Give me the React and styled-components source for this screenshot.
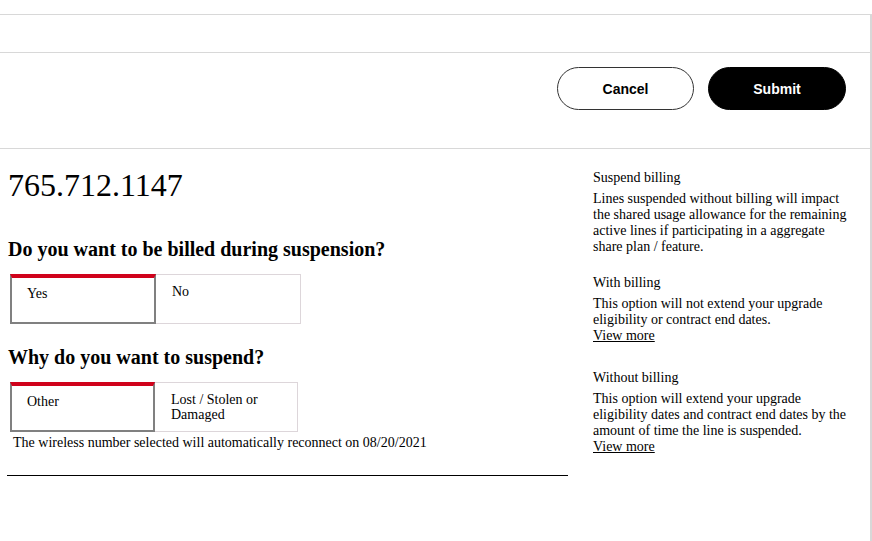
import React, { useState } from 'react';
import styled, { createGlobalStyle } from 'styled-components';

const GlobalStyle = createGlobalStyle`
    html, body {
        margin: 0;
        padding: 0;
        background: #fff;
        color: #000;
        font-family: "Liberation Serif", "Times New Roman", serif;
    }
`;

const Page = styled.div`
    padding-top: 14px;
`;

const Frame = styled.div`
    width: 870px;
    min-height: 527px;
    border-top: 1px solid #d8d8d8;
    border-right: 2px solid #d8d8d8;
`;

const TopBand = styled.div`
    height: 37px;
    border-bottom: 1px solid #d8d8d8;
`;

const ActionBar = styled.div`
    display: flex;
    justify-content: flex-end;
    align-items: flex-start;
    gap: 14px;
    height: 96px;
    padding: 14px 24px 0 0;
    box-sizing: border-box;
    border-bottom: 1px solid #d8d8d8;
`;

const PillButton = styled.button`
    width: ${p => (p.$primary ? '138px' : '137px')};
    height: 43px;
    border-radius: 22px;
    border: 1px solid ${p => (p.$primary ? '#000' : '#333')};
    background: ${p => (p.$primary ? '#000' : '#fff')};
    color: ${p => (p.$primary ? '#fff' : '#000')};
    font-family: "Liberation Sans", Arial, sans-serif;
    font-weight: bold;
    font-size: 14px;
    cursor: pointer;
`;

const Content = styled.div`
    display: grid;
    grid-template-columns: 560px 260px;
    column-gap: 25px;
    padding: 20px 0 0 8px;
`;

const Phone = styled.div`
    font-size: 32px;
    line-height: 32px;
`;

const Question = styled.h3`
    margin: ${p => p.$top}px 0 15px;
    font-size: 20px;
    line-height: 20px;
    font-weight: bold;
`;

const ToggleRow = styled.div`
    display: flex;
    margin-left: 2px;
`;

const Toggle = styled.div`
    width: ${p => p.$w}px;
    height: 50px;
    box-sizing: border-box;
    padding: ${p => (p.$active ? '8px 15px 0' : '9px 16px 0')};
    font-size: 14px;
    line-height: 15px;
    cursor: pointer;
    background: #fff;
    border: ${p => (p.$active ? '2px solid #808080' : '1px solid #ddd6da')};
    border-top: ${p => (p.$active ? '4px solid #d0021b' : '1px solid #ddd6da')};
    border-left-width: ${p => (p.$first || p.$active ? undefined : '0')};
`;

const Note = styled.div`
    font-size: 14px;
    line-height: 16px;
    padding: 3px 0 0 5px;
`;

const Divider = styled.hr`
    margin: 24px 0 0 -1px;
    border: 0;
    border-top: 1px solid #000;
`;

const Aside = styled.div`
    font-size: 14px;
    line-height: 16px;
    padding-top: 1px;
`;

const InfoBlock = styled.div`
    margin-bottom: 20px;
`;

const InfoTitle = styled.div`
    margin-bottom: 5px;
`;

const MoreLink = styled.a`
    display: block;
    color: #000;
    text-decoration: underline;
    padding-bottom: 6px;
    cursor: pointer;
`;

const info = [
    {
        title: 'Suspend billing',
        text: 'Lines suspended without billing will impact the shared usage allowance for the remaining active lines if participating in a aggregate share plan / feature.'
    },
    {
        title: 'With billing',
        text: 'This option will not extend your upgrade eligibility or contract end dates.',
        more: true
    },
    {
        title: 'Without billing',
        text: 'This option will extend your upgrade eligibility dates and contract end dates by the amount of time the line is suspended.',
        more: true
    }
];

function ToggleGroup({ options, value, onChange }) {
    return (
        <ToggleRow>
            {options.map((opt, i) => (
                <Toggle
                    key={opt.label}
                    $w={opt.width}
                    $first={i === 0}
                    $active={value === opt.label}
                    onClick={() => onChange(opt.label)}
                >
                    {opt.label}
                </Toggle>
            ))}
        </ToggleRow>
    );
}

export default function App() {
    const [billed, setBilled] = useState('Yes');
    const [reason, setReason] = useState('Other');

    return (
        <Page>
            <GlobalStyle />
            <Frame>
                <TopBand />
                <ActionBar>
                    <PillButton>Cancel</PillButton>
                    <PillButton $primary>Submit</PillButton>
                </ActionBar>
                <Content>
                    <div>
                        <Phone>765.712.1147</Phone>
                        <Question $top={38}>Do you want to be billed during suspension?</Question>
                        <ToggleGroup
                            options={[{ label: 'Yes', width: 146 }, { label: 'No', width: 145 }]}
                            value={billed}
                            onChange={setBilled}
                        />
                        <Question $top={23}>Why do you want to suspend?</Question>
                        <ToggleGroup
                            options={[{ label: 'Other', width: 145 }, { label: 'Lost / Stolen or Damaged', width: 143 }]}
                            value={reason}
                            onChange={setReason}
                        />
                        <Note>The wireless number selected will automatically reconnect on 08/20/2021</Note>
                        <Divider />
                    </div>
                    <Aside>
                        {info.map(item => (
                            <InfoBlock key={item.title}>
                                <InfoTitle>{item.title}</InfoTitle>
                                <div>{item.text}</div>
                                {item.more && <MoreLink>View more</MoreLink>}
                            </InfoBlock>
                        ))}
                    </Aside>
                </Content>
            </Frame>
        </Page>
    );
}
